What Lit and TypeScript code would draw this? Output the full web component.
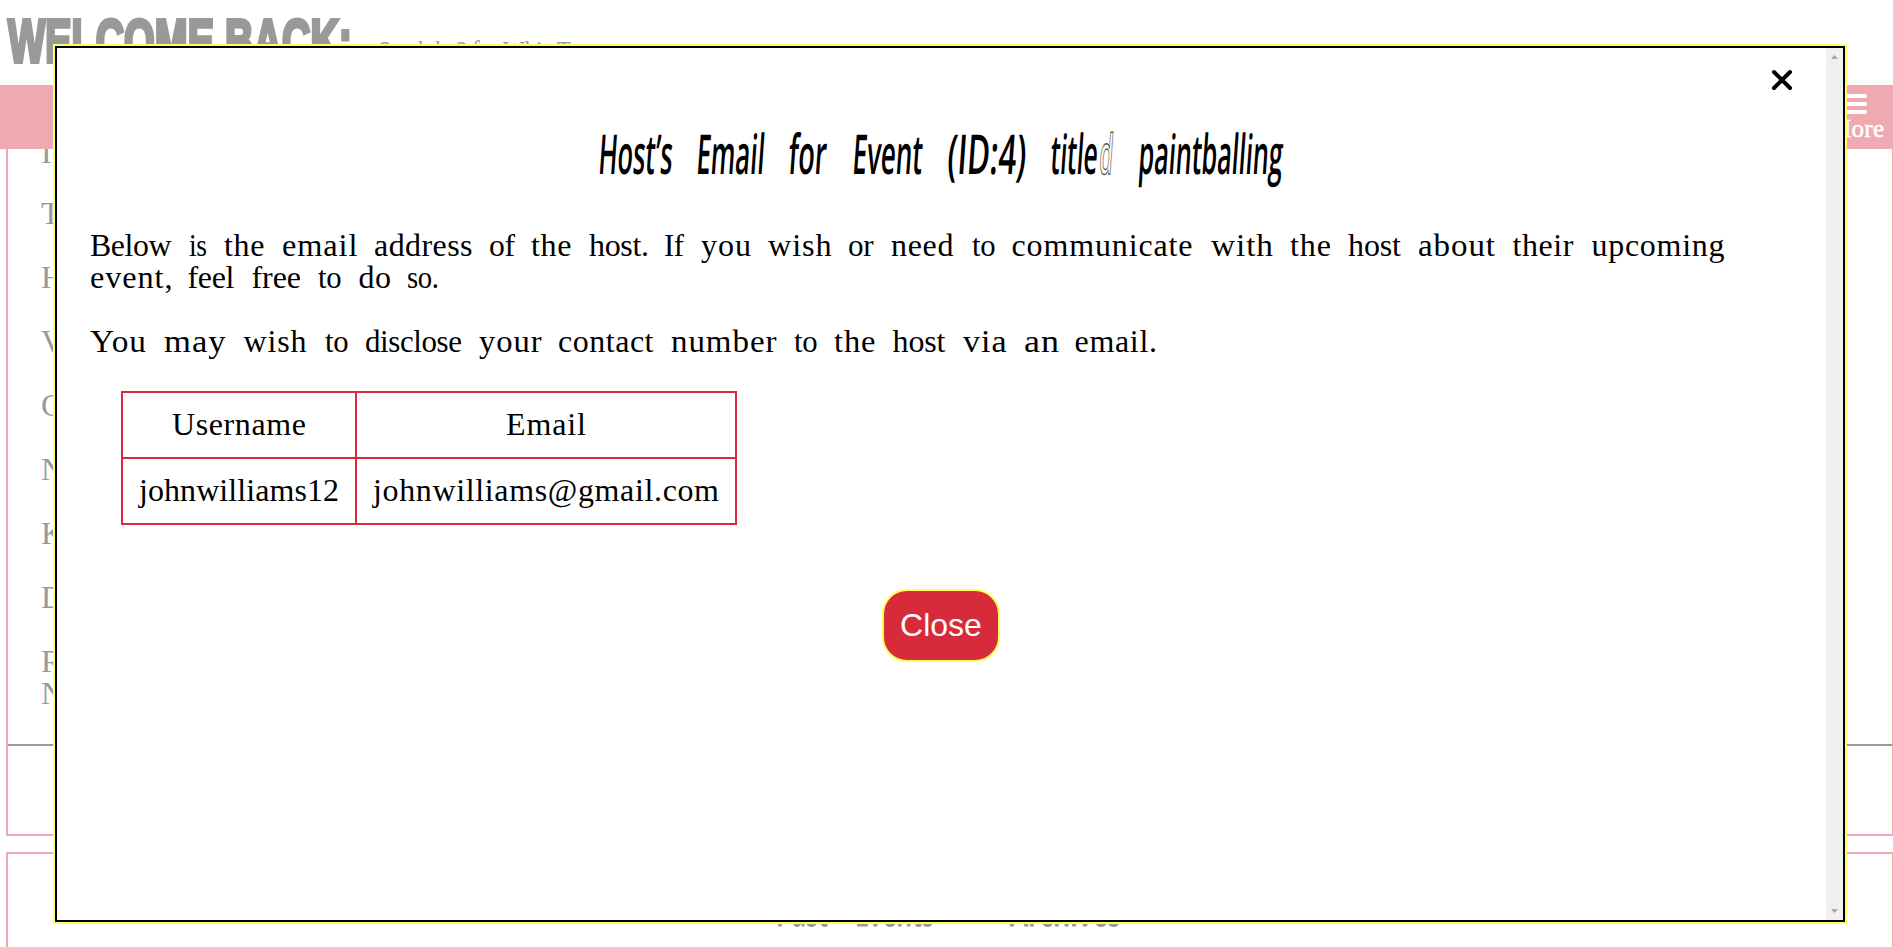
import { LitElement, html, css, svg } from "lit";
import { customElement, property } from "lit/decorators.js";

type Word = [text: string, start: number, end: number];

/** A word fitted to a given width by a little tracking, then by horizontal scale. */
@customElement("fit-word")
class FitWord extends LitElement {
  @property() text = "";
  @property({ type: Number }) width = 0;
  @property({ type: Boolean }) squeeze = false;

  static styles = css`
    :host { display: inline-block; white-space: nowrap; vertical-align: baseline; }
    span { display: inline-block; transform-origin: 0 76%; }
  `;

  updated() {
    const s = this.renderRoot.querySelector("span") as HTMLElement;
    this.style.width = this.width + "px";
    s.style.transform = "none";
    s.style.letterSpacing = "0px";
    const natural = s.getBoundingClientRect().width || 1;
    const slots = Math.max(1, this.text.length - 1);
    let gap = 0;
    if (!this.squeeze) {
      gap = Math.max(-0.4, Math.min(0.9, (this.width - natural) / slots));
      s.style.letterSpacing = gap + "px";
    }
    s.style.transform = `scaleX(${this.width / (natural + gap * slots)})`;
  }

  render() {
    return html`<span>${this.text}</span>`;
  }
}

const words = (line: Word[], origin: number, squeeze = false) =>
  line.map(([text, start, end], i) => {
    const gap = start - (i ? line[i - 1][2] : origin);
    return html`<fit-word style="margin-left:${gap.toFixed(2)}px" .text=${text} .width=${end - start} ?squeeze=${squeeze}></fit-word>`;
  });

const TITLE: Word[] = [
  ["Host’s", 599, 675], ["Email", 697, 767], ["for", 789, 829], ["Event", 853, 925],
  ["(ID:4)", 948, 1029], ["title", 1051, 1100],
];
const LINE1: Word[] = [
  ["Below", 89.5, 171], ["is", 188.5, 206.5], ["the", 224, 264.5], ["email", 281.5, 357],
  ["address", 374, 472.5], ["of", 489, 515], ["the", 531, 571.5], ["host.", 589, 649],
  ["If", 664, 684], ["you", 700.5, 750.5], ["wish", 768, 831.5], ["or", 848, 873.5],
  ["need", 891, 953.5], ["to", 971.5, 995], ["communicate", 1011.5, 1192.5], ["with", 1210.5, 1272.5],
  ["the", 1290, 1331], ["host", 1348, 1401], ["about", 1418, 1495], ["their", 1512.5, 1573.5],
  ["upcoming", 1591.5, 1724.5],
];
const LINE2: Word[] = [
  ["event,", 89.5, 172], ["feel", 187.5, 234.5], ["free", 251.5, 301], ["to", 318, 341.5],
  ["do", 358.5, 391], ["so.", 407, 439],
];
const LINE3: Word[] = [
  ["You", 90, 146], ["may", 163.5, 225], ["wish", 243.5, 306.5], ["to", 324.5, 348],
  ["disclose", 364.5, 461.5], ["your", 478.5, 541], ["contact", 558, 653.5], ["number", 671, 776.5],
  ["to", 793.5, 817], ["the", 834, 875.5], ["host", 892.5, 945.5], ["via", 963, 1006.5],
  ["an", 1023.5, 1058.5], ["email.", 1074.5, 1157],
];

@customElement("app-root")
class AppRoot extends LitElement {
  static styles = css`
    :host {
      display: block; position: relative; width: 1893px; height: 947px; overflow: hidden;
      background: #fff; font-family: "Liberation Serif", serif; font-size: 32px; line-height: 32px; color: #000;
    }
    * { box-sizing: border-box; }
    .page { color: #999; }
    header { height: 85px; padding-left: 8px; display: flex; align-items: flex-start; }
    .welcome { font: 700 61px/65px "Liberation Sans", sans-serif; -webkit-text-stroke: 4px #999; margin-top: 9px; }
    .user { margin: 35px 0 0 26px; font-size: 30px; }
    nav { height: 64px; background: #efa9b1; display: flex; justify-content: flex-end; padding: 9px 9px 0 0; }
    .more { display: flex; flex-direction: column; align-items: center; gap: 3px; color: #fff; font: 400 25px/24px "Liberation Serif", serif; -webkit-text-stroke: 0.5px #fff; }
    .more svg { display: block; margin-left: -8px; }
    .card { width: 1888px; margin-left: 6px; border: 2px solid #efa9b1; }
    .first { height: 687px; border-top: 0; }
    .fields { height: 597px; border-bottom: 2px solid #999; padding-left: 33px; overflow: hidden; }
    .fields div { height: 64px; }
    .fields div:first-child { height: 48px; margin-top: -13px; margin-bottom: 13px; }
    .second { margin-top: 16px; height: 110px; }
    .tabs { display: flex; padding: 28px 0 0 768px; font: 600 50px/50px "Open Sans", sans-serif; -webkit-text-stroke: 1px #999; }
    .dialog {
      position: absolute; left: 53px; top: 44px; width: 1794px; height: 880px;
      border: 2px solid #ffff66; background: #fff;
    }
    .frame { height: 100%; border: 2px solid #000; display: flex; }
    .content { flex: 1; position: relative; padding-left: 33px; }
    .x { position: absolute; left: 1713px; top: 20px; }
    h1 {
      margin: 0; height: 60px; white-space: nowrap; font: 600 55px/60px "Open Sans", sans-serif;
      transform: skewX(-4deg);
    }
    .titlebar { padding-top: 75px; height: 181px; }
    .outline { color: #fff; -webkit-text-stroke: 1.5px #555; }
    .line { height: 32px; white-space: nowrap; }
    .gap { margin-top: 32px; }
    table { border-collapse: collapse; margin: 34px 0 0 31px; table-layout: fixed; width: 616px; }
    td { border: 2px solid #d72a3c; height: 66px; padding: 0 0 2px; text-align: center; }
    .button {
      margin: 64px 0 0 792px; width: 118px; height: 73px; border: 2px solid #ffff55; border-radius: 25px;
      background: #d72a3b; color: #fff; font: 32px/66px "Liberation Sans", sans-serif; text-align: center; padding: 0 0 2px;
      display: block;
    }
    .scroll {
      width: 17px; background: #f0f0f0; display: flex; flex-direction: column; align-items: center;
      justify-content: space-between; padding: 7px 0;
    }
    .scroll svg { display: block; }
    .c1 { width: 234px; }
  `;

  render() {
    return html`
      <div class="page">
        <header>
          <div class="welcome"><fit-word .text=${"WELCOME BACK:"} .width=${344} squeeze></fit-word></div>
          <div class="user"><fit-word .text=${"Sarahthe? for WhistT"} .width=${193}></fit-word></div>
        </header>
        <nav>
          <div class="more">
            ${svg`<svg width="28" height="20" viewBox="0 0 28 20"><path d="M2 2H26M2 10H26M2 18H26" stroke="#fff" stroke-width="4" stroke-linecap="round"/></svg>`}
            <fit-word .text=${"More"} .width=${55}></fit-word>
          </div>
        </nav>
        <section class="card first">
          <div class="fields">
            ${["Id", "Title", "Host", "Venue", "Contact", "Number", "Kind", "Date"].map((t) => html`<div>${t}</div>`)}
            <div>Required<br />Number</div>
          </div>
        </section>
        <section class="card second">
          <div class="tabs">${words([["Past", 776, 828], ["Events", 855, 934], ["Archives", 1010, 1121]], 776, true)}</div>
        </section>
      </div>
      <div class="dialog"><div class="frame">
        <div class="content">
          <svg class="x" width="24" height="24" viewBox="0 0 24 24"><path d="M4 4L20 20M20 4L4 20" stroke="#000" stroke-width="4" stroke-linecap="round"/></svg>
          <div class="titlebar">
            <h1>${words(TITLE, 90, true)}<fit-word class="outline" .text=${"d"} .width=${15} squeeze></fit-word>${words([["paintballing", 1139, 1285]], 1115, true)}</h1>
          </div>
          <div class="line">${words(LINE1, 90)}</div>
          <div class="line">${words(LINE2, 90)}</div>
          <div class="line gap">${words(LINE3, 90)}</div>
          <table>
            <tr><td class="c1"><fit-word .text=${"Username"} .width=${134}></fit-word></td><td><fit-word .text=${"Email"} .width=${80}></fit-word></td></tr>
            <tr><td><fit-word .text=${"johnwilliams12"} .width=${200}></fit-word></td><td><fit-word .text=${"johnwilliams@gmail.com"} .width=${346}></fit-word></td></tr>
          </table>
          <button class="button">Close</button>
        </div>
        <div class="scroll">
          <svg width="7" height="4" viewBox="0 0 7 4"><path d="M0 4L3.5 0L7 4Z" fill="#a3a3a3"/></svg>
          <svg width="7" height="4" viewBox="0 0 7 4"><path d="M0 0L3.5 4L7 0Z" fill="#a3a3a3"/></svg>
        </div>
      </div></div>
    `;
  }
}
